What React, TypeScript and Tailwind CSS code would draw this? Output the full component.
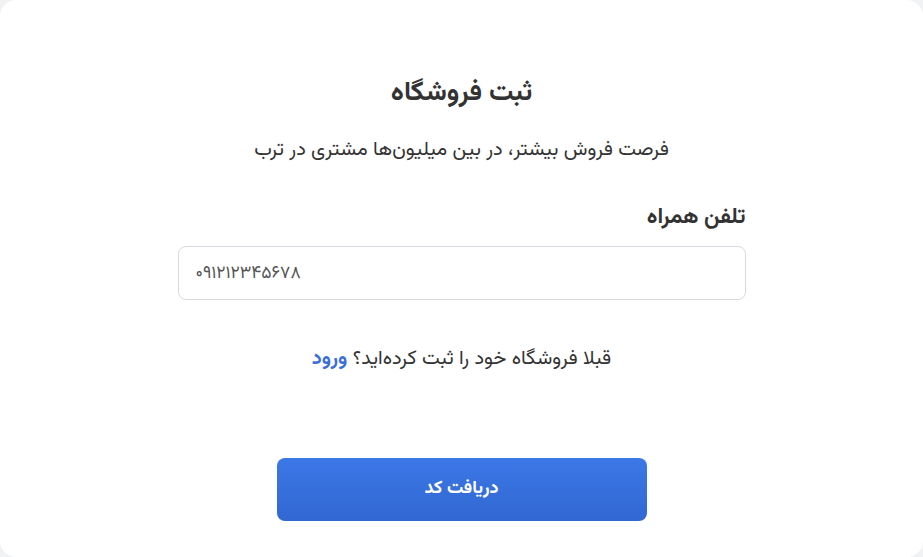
const font: React.CSSProperties = {
  fontFamily: '"Vazirmatn", "Noto Sans Arabic", "DejaVu Sans", sans-serif',
}

export default function App() {
  return (
    <div className="h-screen w-full bg-[#f1f2f3]" style={font} dir="rtl">
      <div className="h-full w-full rounded-2xl bg-white flex flex-col items-center pt-[76px]">
        <h1 className="text-[27px] leading-[36px] font-bold text-[#333]">ثبت فروشگاه</h1>
        <p className="mt-[24px] text-[20px] leading-[28px] text-[#333]">
          فرصت فروش بیشتر، در بین میلیون‌ها مشتری در ترب
        </p>
        <div className="mt-[38px] w-[568px] flex flex-col">
          <label className="text-[22px] leading-[32px] font-bold text-[#333]">تلفن همراه</label>
          <input
            dir="ltr"
            readOnly
            value="۰۹۱۲۱۲۳۴۵۶۷۸"
            className="mt-[12px] h-[54px] w-full rounded-lg border border-[#d7dbe0] px-[17px] text-[17.5px] text-[#555] outline-none"
          />
        </div>
        <p className="mt-[45px] text-[20px] leading-[28px] text-[#333]">
          قبلا فروشگاه خود را ثبت کرده‌اید؟{' '}
          <a href="#" className="font-bold text-[#3a6fd8]">ورود</a>
        </p>
        <button className="mt-[85px] h-[63px] w-[370px] rounded-lg bg-gradient-to-b from-[#3b78e7] to-[#3267d2] text-[18px] font-bold text-white">
          دریافت کد
        </button>
      </div>
    </div>
  )
}
